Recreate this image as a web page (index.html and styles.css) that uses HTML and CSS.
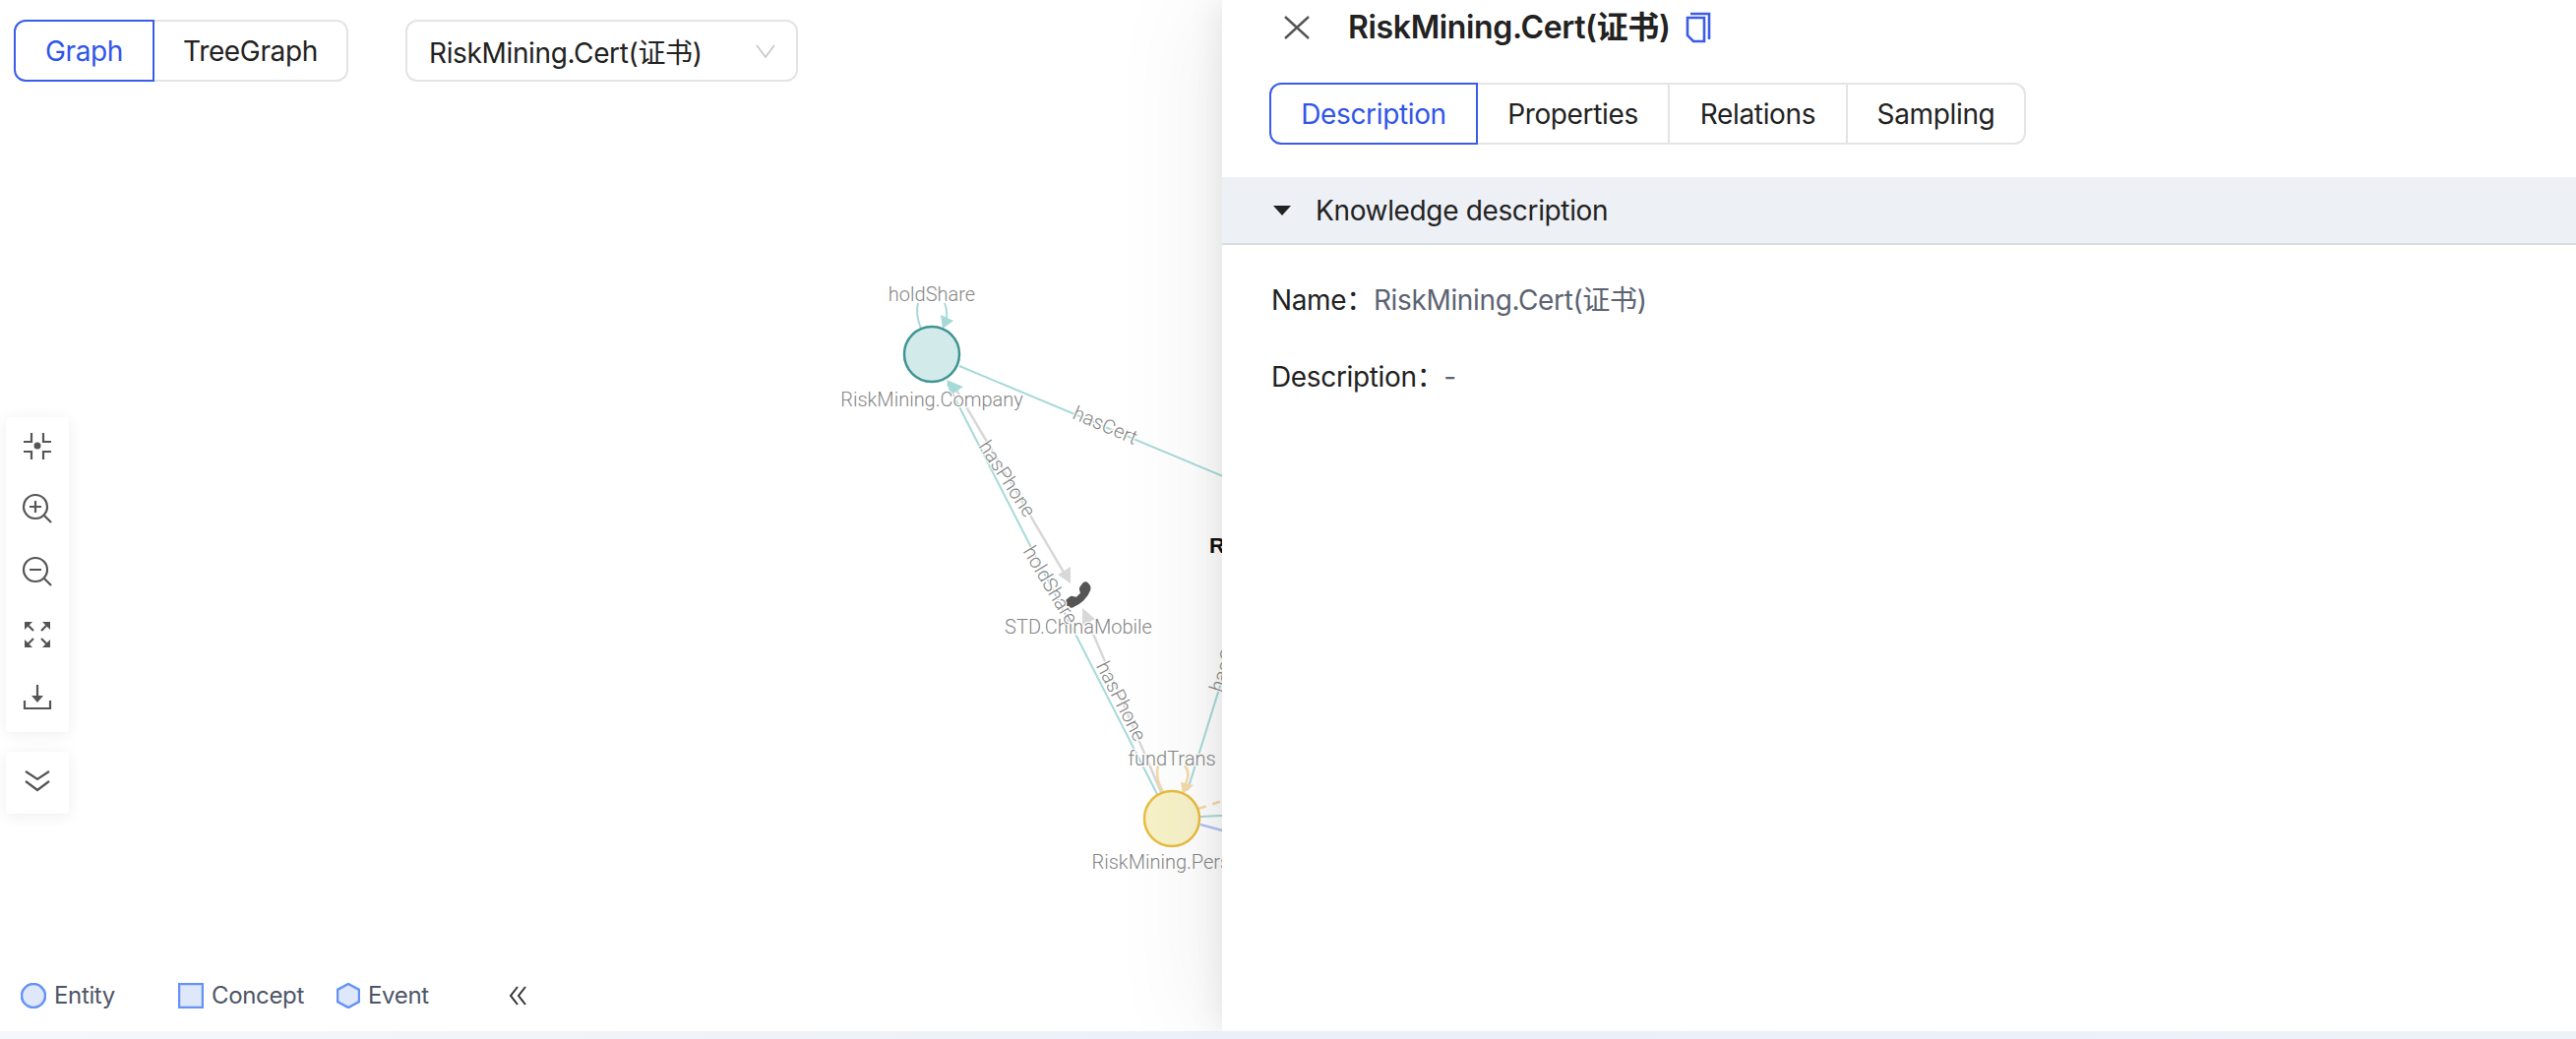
FILE: index.html
```html
<!DOCTYPE html>
<html lang="en">
<head>
<meta charset="utf-8">
<title>RiskMining.Cert</title>
<link rel="stylesheet" href="styles.css">
</head>
<body>
<div class="app">
  <main class="workspace">
    <section class="graph-pane">
      <svg class="canvas" width="1400" height="1048" viewBox="0 0 1400 1048">
        <g class="edge teal">
          <path d="M975 372 L1300 508"/>
          <path d="M963 390 L1177 809"/>
          <path d="M936 334 C932 324 931 316 933 308"/>
          <path d="M960 308 C963 316 963 322 961 328"/>
          <path d="M1207 803 L1300 505"/>
          <path d="M1220 830 L1300 826"/>
        </g>
        <g class="edge grey">
          <path d="M970 393 L1083 585"/>
          <path d="M1180 805 L1104 628"/>
        </g>
        <g class="edge peach">
          <path d="M1182 805 C1176 795 1175 785 1177 778"/>
          <path d="M1204 778 C1209 785 1208 790 1205 797"/>
        </g>
        <path class="edge peach dashed" d="M1218 822 L1300 795"/>
        <path class="edge blue" d="M1220 838 L1300 860"/>

        <polygon class="tip-teal" points="958,334 956,320 969,326"/>
        <polygon class="tip-teal" points="962,386 979,393 966,402"/>
        <polygon class="tip-grey" points="1088,593 1075,584 1088,576"/>
        <polygon class="tip-grey" points="1100,618 1113,629 1100,636"/>
        <polygon class="tip-peach" points="1202,807 1200,795 1213,798"/>

        <circle class="node-company" cx="947" cy="360" r="28"/>
        <circle class="node-person" cx="1191" cy="832" r="28"/>
        <g class="phone" transform="translate(1108 592) scale(-1.56 1.56)">
          <path d="M1.885.511a1.745 1.745 0 0 1 2.61.163L6.29 2.98c.329.423.445.974.315 1.494l-.547 2.19a.678.678 0 0 0 .178.643l2.457 2.457a.678.678 0 0 0 .644.178l2.189-.547a1.745 1.745 0 0 1 1.494.315l2.306 1.794c.829.645.905 1.87.163 2.611l-1.034 1.034c-.74.74-1.846 1.065-2.877.702a18.634 18.634 0 0 1-7.01-4.42 18.634 18.634 0 0 1-4.42-7.009c-.362-1.03-.037-2.137.703-2.877L1.885.511z"/>
        </g>

        <text class="label" x="947" y="306">holdShare</text>
        <text class="label" x="947" y="413">RiskMining.Company</text>
        <text class="label" x="1096" y="644">STD.ChinaMobile</text>
        <text class="label" x="1191" y="883">RiskMining.Person</text>
        <text class="label" x="1191" y="778">fundTrans</text>
        <text class="label" transform="translate(1123 433) rotate(23)" y="6">hasCert</text>
        <text class="label" transform="translate(1023 487) rotate(57)" y="6">hasPhone</text>
        <text class="label" transform="translate(1067 595) rotate(59)" y="6">holdShare</text>
        <text class="label" transform="translate(1139 713) rotate(63)" y="6">hasPhone</text>
        <text class="label" transform="translate(1247 670) rotate(-72)" y="6">hasCert</text>
        <text class="node-title" x="1229" y="562">RiskMining.Cert</text>
      </svg>

      <div class="topbar">
        <div class="segmented">
          <button class="seg seg-first seg-active graph-w">Graph</button>
          <button class="seg seg-last tree-w">TreeGraph</button>
        </div>
        <div class="select">
          <span>RiskMining.Cert(证书)</span>
          <svg class="select-arrow" width="20" height="14" viewBox="0 0 20 14"><path d="M1 1 L10 13 L19 1"/></svg>
        </div>
      </div>

      <div class="tool-stack">
        <div class="tool-card">
          <div class="tool">
            <svg class="ico" width="28" height="28" viewBox="0 0 28 28"><path d="M0 10H8V1M20 1V10H28M0 20H8V28M20 28V20H28"/><circle class="ico-fill" cx="14" cy="14" r="3.5"/></svg>
          </div>
          <div class="tool">
            <svg class="ico" width="30" height="30" viewBox="0 0 30 30"><circle cx="13" cy="13" r="12"/><path d="M22 22L29 29M7 13H19M13 7V19"/></svg>
          </div>
          <div class="tool">
            <svg class="ico" width="30" height="30" viewBox="0 0 30 30"><circle cx="13" cy="13" r="12"/><path d="M22 22L29 29M7 13H19"/></svg>
          </div>
          <div class="tool">
            <svg class="ico" width="26" height="26" viewBox="0 0 26 26"><path d="M3 3L9 9M23 3L17 9M3 23L9 17M23 23L17 17"/><path class="ico-fill" d="M0 0H8L0 8ZM26 0H18L26 8ZM0 26H8L0 18ZM26 26H18L26 18Z"/></svg>
          </div>
          <div class="tool">
            <svg class="ico" width="28" height="26" viewBox="0 0 28 26"><path d="M14 0V16M1 16V24H27V16"/><path class="ico-fill" d="M8 11H20L14 18Z"/></svg>
          </div>
        </div>
        <div class="tool-card tool-card-single">
          <svg class="ico" width="26" height="22" viewBox="0 0 26 22"><path d="M1 1L13 9L25 1M1 11L13 20L25 11"/></svg>
        </div>
      </div>

      <div class="legend">
        <div class="legend-item entity-item">
          <svg width="26" height="26" viewBox="0 0 26 26"><circle class="legend-shape" cx="13" cy="13" r="12"/></svg>
          <span>Entity</span>
        </div>
        <div class="legend-item concept-item">
          <svg width="26" height="26" viewBox="0 0 26 26"><rect class="legend-shape" x="1" y="1" width="24" height="24"/></svg>
          <span>Concept</span>
        </div>
        <div class="legend-item event-item">
          <svg width="24" height="26" viewBox="0 0 24 26"><polygon class="legend-shape" points="12,1 23,7 23,19 12,25 1,19 1,7"/></svg>
          <span>Event</span>
        </div>
        <svg class="legend-collapse" width="18" height="20" viewBox="0 0 18 20"><path d="M9 1L2 10L9 19M17 1L10 10L17 19"/></svg>
      </div>
    </section>

    <aside class="drawer">
      <header class="drawer-title">
        <svg class="close" width="26" height="24" viewBox="0 0 26 24"><path d="M1 1L25 23M25 1L1 23"/></svg>
        <h1>RiskMining.Cert(证书)</h1>
        <svg class="copy" width="26" height="32" viewBox="0 0 26 32"><path d="M5 2H24V28"/><path d="M2 6H19V30H8L2 24Z"/></svg>
      </header>
      <nav class="tabs">
        <button class="seg seg-first seg-active tab">Description</button>
        <button class="seg tab">Properties</button>
        <button class="seg tab">Relations</button>
        <button class="seg seg-last tab">Sampling</button>
      </nav>
      <div class="collapse-head">
        <span class="caret"></span>
        <span>Knowledge description</span>
      </div>
      <dl class="desc">
        <div class="desc-row">
          <dt>Name：</dt>
          <dd>RiskMining.Cert(证书)</dd>
        </div>
        <div class="desc-row">
          <dt>Description：</dt>
          <dd>-</dd>
        </div>
      </dl>
    </aside>
  </main>
  <footer class="strip"></footer>
</div>
</body>
</html>
```

FILE: styles.css
```css
* { box-sizing: border-box; }
html, body { margin: 0; height: 100%; background: #fff; }
body {
  font-family: Inter, "Noto Sans CJK SC", sans-serif;
  font-size: 28px;
  letter-spacing: -0.35px;
  color: #222;
  overflow: hidden;
}
.app { display: flex; flex-direction: column; height: 100vh; overflow: hidden; }
.workspace { flex: 1; display: flex; min-height: 0; position: relative; }
.strip { height: 8px; background: linear-gradient(90deg, #f6f7fb, #eceff8 50%, #eef1f8); position: relative; z-index: 3; }

/* left pane */
.graph-pane {
  position: relative;
  width: 1242px;
  flex: none;
  display: flex;
  flex-direction: column;
}
.canvas { position: absolute; left: 0; top: 0; overflow: visible; }
.topbar {
  position: relative;
  display: flex;
  gap: 58px;
  padding: 20px 0 0 14px;
}
.segmented { display: flex; }
.seg {
  height: 63px;
  padding: 0 32px;
  margin: 0;
  font: inherit;
  letter-spacing: inherit;
  color: #222;
  background: #fff;
  border: 2px solid #e4e4e4;
  border-left-width: 0;
  cursor: pointer;
}
.seg-first { border-left-width: 2px; border-radius: 12px 0 0 12px; }
.seg-last { border-radius: 0 12px 12px 0; }
.seg-active { color: #3155e8; border-color: #3a5ce8; border-left-width: 2px; }
.graph-w { width: 143px; padding: 0; }
.tree-w { width: 197px; padding: 0; }
.select {
  width: 399px;
  height: 63px;
  padding: 0 21px 0 22px;
  display: flex;
  align-items: center;
  justify-content: space-between;
  border: 2px solid #e4e4e4;
  border-radius: 12px;
  background: #fff;
}
.select-arrow path { fill: none; stroke: #c6c6c6; stroke-width: 1.6; }

/* graph */
.edge { fill: none; stroke-width: 2; }
.teal { stroke: #a6dad8; }
.grey { stroke: #d8d8d8; stroke-width: 2.5; }
.peach { stroke: #f5d9a8; stroke-width: 2.5; }
.dashed { stroke-dasharray: 8 7; }
.blue { stroke: #b3c6f4; stroke-width: 2.5; }
.tip-teal { fill: #a6dad8; }
.tip-grey { fill: #d8d8d8; }
.tip-peach { fill: #f5d9a8; }
.node-company { fill: #d2ebea; stroke: #3f9494; stroke-width: 2.5; }
.node-person { fill: #f8f2c9; stroke: #e9bd3f; stroke-width: 2.5; }
.phone path { fill: #555; stroke: #555; stroke-width: .9; stroke-linejoin: round; }
.label {
  font-family: Roboto, sans-serif;
  font-weight: 300;
  font-size: 20px;
  letter-spacing: 0;
  fill: #858585;
  text-anchor: middle;
  paint-order: stroke;
  stroke: #fff;
  stroke-width: 2.5px;
}
.node-title {
  font-family: "Liberation Sans", sans-serif;
  font-weight: 700;
  font-size: 22px;
  letter-spacing: 0;
  fill: #111;
}

/* tools */
.tool-stack {
  position: absolute;
  left: 6px;
  top: 424px;
  display: flex;
  flex-direction: column;
  gap: 20px;
}
.tool-card {
  width: 64px;
  height: 320px;
  display: flex;
  flex-direction: column;
  gap: 6px;
  background: #fff;
  border-radius: 4px;
  box-shadow: 0 2px 16px rgba(0, 0, 0, .07);
}
.tool { height: 58px; display: flex; align-items: center; justify-content: center; }
.tool-card-single { height: 63px; padding-bottom: 4px; align-items: center; justify-content: center; }
.ico { fill: none; stroke: #555; stroke-width: 2.2; overflow: visible; }
.ico .ico-fill { fill: #555; stroke: none; }

/* legend */
.legend {
  position: relative;
  margin-top: auto;
  display: flex;
  align-items: center;
  padding: 0 0 22px 21px;
  font-size: 24px;
  color: #4e5568;
}
.legend-item { display: flex; align-items: center; gap: 8px; }
.entity-item { width: 160px; }
.concept-item { width: 161px; }
.event-item { width: 175px; }
.legend-shape { fill: #dfe8fb; stroke: #6492f7; stroke-width: 2.5; }
.legend-collapse path { fill: none; stroke: #333; stroke-width: 2; }

/* drawer */
.drawer {
  position: relative;
  z-index: 2;
  flex: 1;
  min-width: 0;
  background: #fff;
  box-shadow: -4px 0 30px rgba(0, 0, 0, .08), -30px 0 90px rgba(0, 0, 0, .05);
}
.drawer-title {
  height: 56px;
  display: flex;
  align-items: center;
  padding-left: 63px;
}
.close { fill: none; stroke: #555; stroke-width: 2.4; }
.drawer-title h1 {
  margin: 0 15px 0 39px;
  font-size: 32px;
  font-weight: 600;
  line-height: 56px;
  color: #222;
}
.copy { fill: none; stroke: #3a5ce8; stroke-width: 2.6; }
.tabs { display: flex; padding: 28px 0 0 48px; }
.tab:nth-child(1) { width: 212px; padding: 0; }
.tab:nth-child(2) { width: 195px; padding: 0; }
.tab:nth-child(3) { width: 181px; padding: 0; }
.tab:nth-child(4) { width: 181px; padding: 0; }
.collapse-head {
  margin-top: 33px;
  height: 69px;
  display: flex;
  align-items: center;
  padding-left: 52px;
  gap: 25px;
  background: #edf0f5;
  border-bottom: 2px solid #d9dde3;
}
.caret {
  width: 0;
  height: 0;
  border-left: 9px solid transparent;
  border-right: 9px solid transparent;
  border-top: 10px solid #222;
}
.desc { margin: 0; padding: 35px 0 0 50px; }
.desc-row { display: flex; height: 78px; line-height: 42px; }
.desc-row dt { margin: 0; }
.desc-row dd { margin: 0; color: #5c6372; }
```
